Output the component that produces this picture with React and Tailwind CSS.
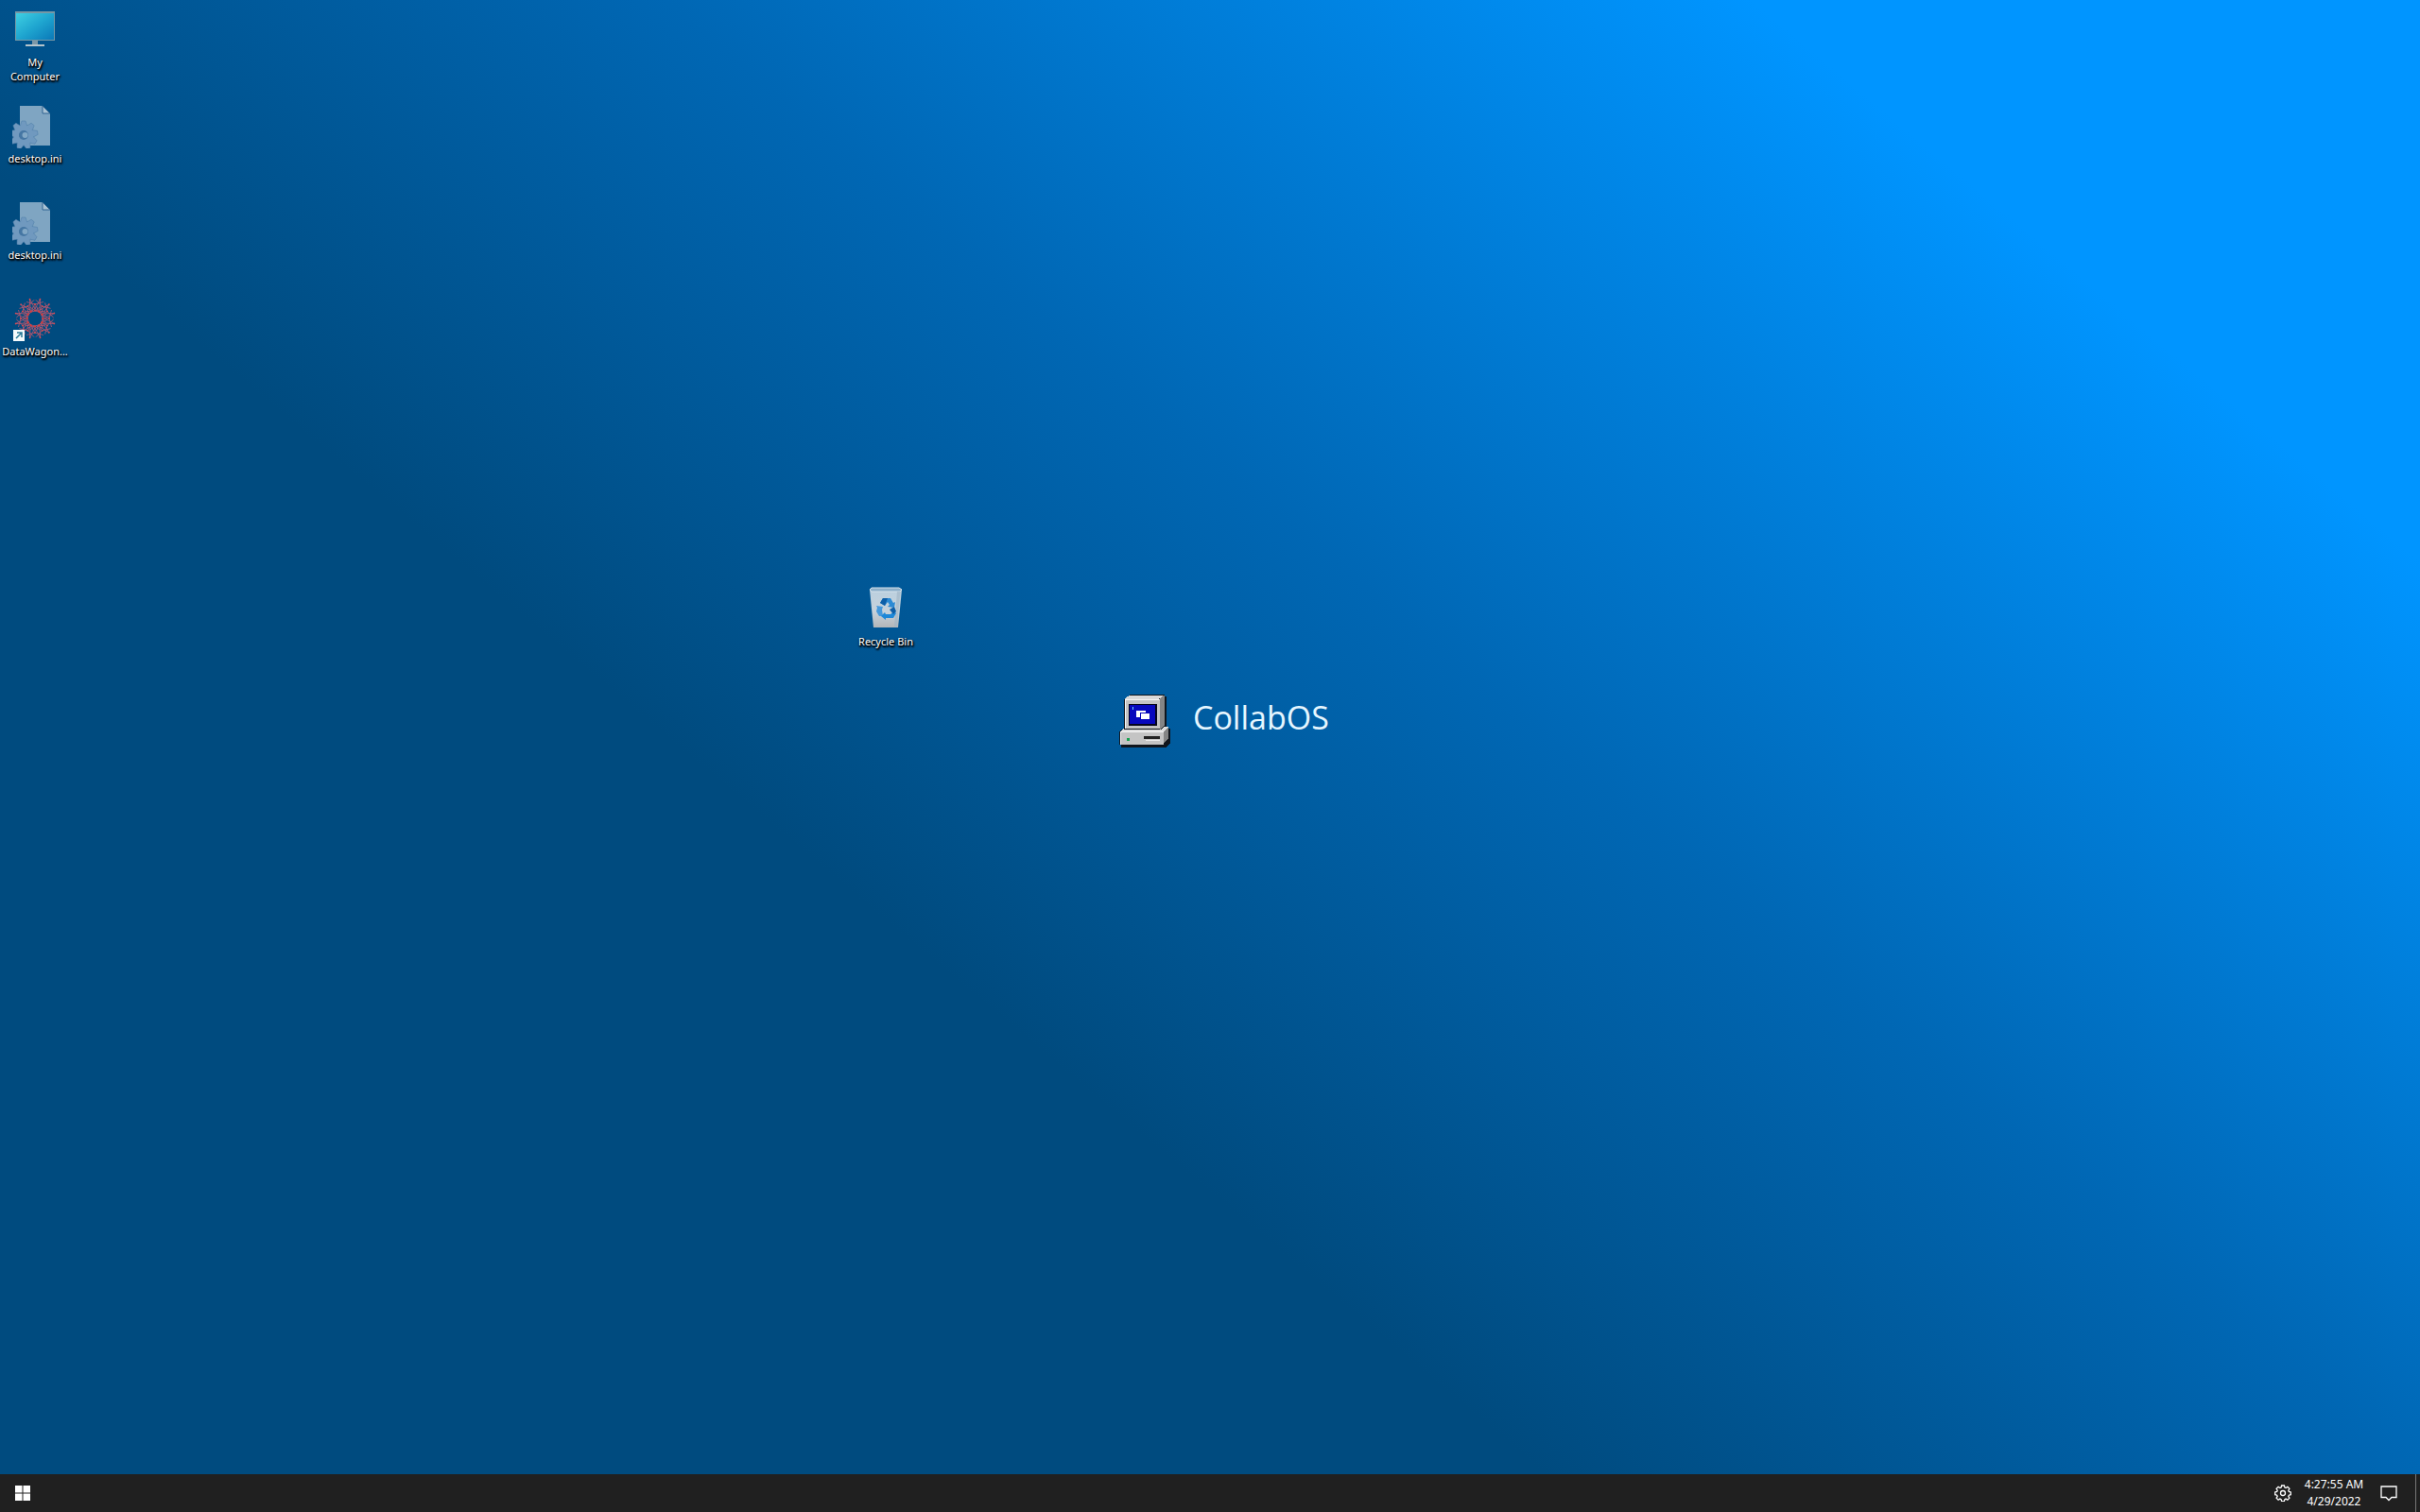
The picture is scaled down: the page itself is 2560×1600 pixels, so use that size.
const labelStyle =
  'block text-center font-["Noto_Sans",sans-serif] text-[11px] leading-[15px] text-white [text-shadow:0_1px_2px_#000,1px_1px_2px_#000,1px_2px_2px_#000]';

function MonitorIcon() {
  return (
    <svg width="48" height="48" viewBox="0 0 48 48" aria-hidden="true">
      <defs>
        <linearGradient id="screen" x1="0" y1="0" x2="1" y2="1">
          <stop offset="0" stopColor="#3fd0e2" />
          <stop offset="0.5" stopColor="#1fa6d0" />
          <stop offset="1" stopColor="#0a78b8" />
        </linearGradient>
      </defs>
      <rect x="3" y="5" width="42" height="31" fill="#7597a5" />
      <rect x="4" y="7" width="40" height="28" fill="url(#screen)" />
      <path d="M21 36h6v4h-6z" fill="#7d98a8" />
      <path d="M14 40h20v2H14z" fill="#b5c4cc" />
    </svg>
  );
}

function IniIcon() {
  return (
    <svg width="48" height="48" viewBox="0 0 48 48" aria-hidden="true">
      <path d="M8 3h24l8 8v34H8z" fill="#7fa5c2" />
      <path d="M32 3l8 8h-8z" fill="#a9c2d4" stroke="#2f6391" strokeWidth="1" />
      <g fill="#7099bf" stroke="#4d7da8" strokeWidth="0.5">
        {[0, 40, 80, 120, 160, 200, 240, 280, 320].map((a) => (
          <path key={a} d="M8 25l2-6h4l2 6z" transform={`rotate(${a} 12 34)`} />
        ))}
      </g>
      <circle cx="12" cy="34" r="7.5" fill="none" stroke="#7099bf" strokeWidth="6" />
      <circle cx="12" cy="34" r="5" fill="#4576a3" />
      <circle cx="13.5" cy="34" r="3" fill="#82a8c6" />
    </svg>
  );
}

function WagonIcon() {
  const rays = [0, 30, 60, 90, 120, 150, 180, 210, 240, 270, 300, 330];
  return (
    <svg width="48" height="48" viewBox="0 0 48 48" aria-hidden="true">
      {rays.map((a) => (
        <g key={a} transform={`rotate(${a} 24 24)`}>
          <g fill="none" stroke="#b5566f" strokeWidth="0.8">
            <path d="M24 14L29.400 3.700M24 14L18.600 3.700M24 9L33 6.500M24 9L15 6.500" />
            <path d="M24 9v7M24 16l5-4M24 16l-5-4M24 16l7.500 2" />
          </g>
          <circle cx="24" cy="15.500" r="1.100" fill="#e03a35" />
          <circle cx="24" cy="9" r="0.900" fill="#e8484a" />
          <circle cx="29.400" cy="3.700" r="0.900" fill="#e8484a" />
        </g>
      ))}
      <rect x="1" y="36" width="12" height="12" fill="#f4fafc" />
      <path d="M4 45l5.500-5.500M5 39h5v5" fill="none" stroke="#2b7b98" strokeWidth="1.500" />
    </svg>
  );
}

function BinIcon() {
  return (
    <svg width="48" height="48" viewBox="0 0 48 48" aria-hidden="true">
      <defs>
        <linearGradient id="bin" x1="0" y1="0" x2="0" y2="1">
          <stop offset="0" stopColor="#b9cfdf" />
          <stop offset="0.6" stopColor="#c6d2db" />
          <stop offset="1" stopColor="#b3b6b9" />
        </linearGradient>
      </defs>
      <path d="M7 4l2-2h29l3 2-4 40H11z" fill="url(#bin)" />
      <path d="M7 4l2-2h29l3 2-2 2H9z" fill="#8db0ca" stroke="#d7e3eb" strokeWidth="1" />
      <path d="M36 6h3.500L36 43h-3z" fill="#9fb4c4" opacity="0.6" />
      <path d="M18 18l3-5h8l3 5 2-1-1 6-7-1 2-2-2-3-3 4z" fill="#2b8ad4" />
      <path d="M18 18l3-5h5l-3 8z" fill="#0d5fa8" />
      <path d="M14 21l7 1-1 3 1 7h-4l-3-5 1-4z" fill="#4599dc" />
      <path d="M23 28l1 2h5l4-3 2 2-3 5h-8v2l-5-4z" fill="#1e88d8" />
      <path d="M28 25l5-3 2 5-3 3z" fill="#0d5fa8" />
    </svg>
  );
}

function RetroComputer() {
  return (
    <svg width="56" height="58" viewBox="0 0 56 58" aria-hidden="true" shapeRendering="crispEdges">
      <path d="M12 0h36v2h2v34h4v15l-4 5H2v-3H0V39l5-3V5z" fill="#10151c" />
      <path d="M11 1h35v2l-5 2H6V4z" fill="#d9d9d9" />
      <path d="M42 5l5-4h1v32l-5 4z" fill="#858585" />
      <path d="M6 5h37v31H6z" fill="#c4c4c4" />
      <path d="M6 5h37v1H7v30H6z" fill="#f5f5f5" />
      <path d="M10 10h30v23H10z" fill="#05051c" />
      <path d="M11 11h27v20H11z" fill="#0707bd" />
      <path d="M14 13h1v3h-1z" fill="#70d8ff" />
      <path d="M18 17h10v7H18z" fill="#fff" />
      <path d="M22 19h11v8H22z" fill="#0707bd" />
      <path d="M23 20h9v6h-9z" fill="#fff" />
      <path d="M5 35l-4 4h46l5-5h-4l-4 3H5z" fill="#dedede" />
      <path d="M46 40l6-6v12l-6 7z" fill="#858585" />
      <path d="M1 39h46v14H1z" fill="#c4c4c4" />
      <path d="M1 39h46v1H2v13H1z" fill="#f5f5f5" />
      <path d="M26 44h17v3H26z" fill="#222" />
      <path d="M28 48h15v1H28z" fill="#eee" />
      <path d="M8 46h3v3H8z" fill="#17a350" />
    </svg>
  );
}

function DesktopIcon({ icon, label, className = "" }) {
  return (
    <button type="button" className={`flex w-[74px] flex-col items-center gap-[3px] ${className}`}>
      {icon}
      <span className={labelStyle}>{label}</span>
    </button>
  );
}

export default function App() {
  return (
    <div className="flex h-screen flex-col overflow-hidden">
      <main
        aria-label="Desktop"
        className="relative flex-1 bg-[linear-gradient(40deg,#004b7f_37%,#0067b4_58%,#0095ff_84%)]"
      >
        <nav aria-label="Desktop icons" className="flex w-[74px] flex-col">
          <DesktopIcon className="h-[102px] pt-[7px]" icon={<MonitorIcon />} label={<>My<br />Computer</>} />
          <DesktopIcon className="h-[102px] pt-[7px]" icon={<IniIcon />} label="desktop.ini" />
          <DesktopIcon className="h-[102px] pt-[7px]" icon={<IniIcon />} label="desktop.ini" />
          <DesktopIcon className="h-[102px] pt-[7px]" icon={<WagonIcon />} label="DataWagon..." />
        </nav>
        <div className="absolute left-[900px] top-[620px]">
          <DesktopIcon icon={<BinIcon />} label="Recycle Bin" />
        </div>
        <div className="absolute left-[1184px] top-[735px] flex items-start gap-[22px]">
          <RetroComputer />
          <span className='font-["Open_Sans",sans-serif] text-[34px] leading-[48px] text-[#e6f6ff]'>CollabOS</span>
        </div>
      </main>
      <footer className="flex h-10 items-center justify-between bg-[#202020] text-white">
        <button type="button" aria-label="Start" className="flex h-10 w-12 items-center justify-center">
          <svg width="16" height="16" viewBox="0 0 16 16" fill="#fff" aria-hidden="true">
            <path d="M0 0h7.500v7.500H0zM8.500 0H16v7.500H8.500zM0 8.500h7.500V16H0zM8.500 8.500H16V16H8.500z" />
          </svg>
        </button>
        <div className="flex h-10 items-center">
          <button type="button" aria-label="Settings" className="flex h-10 w-8 items-center justify-center">
            <svg width="18" height="18" viewBox="0 0 18 18" fill="none" stroke="#fff" strokeWidth="1.300" aria-hidden="true">
              <path d="M7.600 1h2.800l.5 2 1.200.5 1.800-1.100 2 2-1.100 1.800.5 1.200 2 .5v2.800l-2 .5-.5 1.200 1.100 1.800-2 2-1.800-1.100-1.200.5-.5 2H7.600l-.5-2-1.200-.5-1.800 1.100-2-2 1.100-1.800-.5-1.200-2-.5V7.900l2-.5.5-1.200-1.100-1.800 2-2 1.800 1.100L7.100 3z" />
              <circle cx="9" cy="9" r="2.500" />
            </svg>
          </button>
          <button type="button" className='flex w-[76px] flex-col items-center font-["Noto_Sans",sans-serif] text-[12px] leading-[18px]'>
            <span>4:27:55 AM</span>
            <span>4/29/2022</span>
          </button>
          <button type="button" aria-label="Notifications" className="flex h-10 w-10 items-center justify-center">
            <svg width="18" height="18" viewBox="0 0 18 18" fill="none" stroke="#fff" strokeWidth="1.300" aria-hidden="true">
              <path d="M1 2h16v11.500h-5L9 16.500l-3-3H1z" />
            </svg>
          </button>
          <button type="button" aria-label="Show desktop" className="ml-2 h-10 w-[5px] border-l border-[#777]" />
        </div>
      </footer>
    </div>
  );
}
